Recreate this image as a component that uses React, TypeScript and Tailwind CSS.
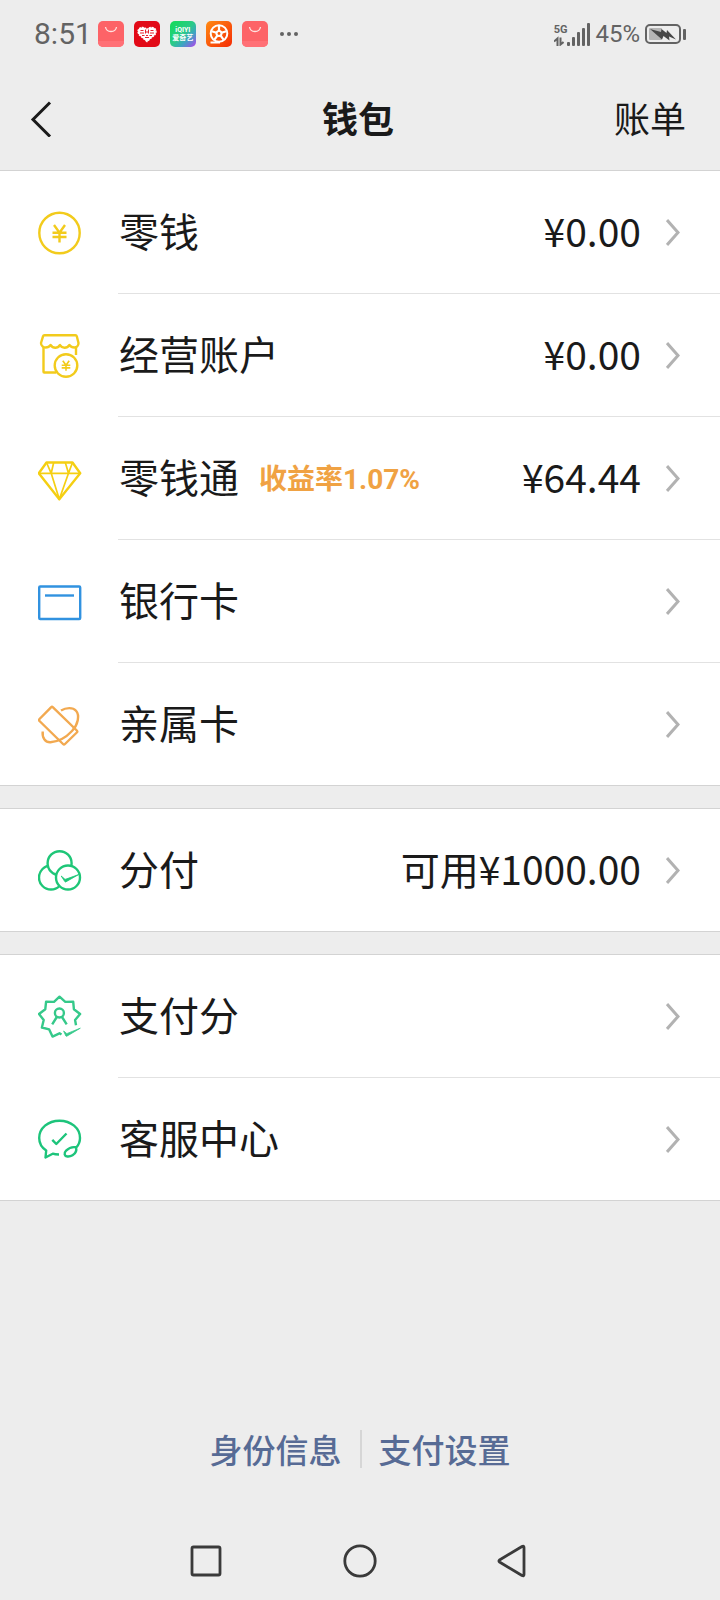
import type { ReactNode } from "react";

type Row = {
  label: string;
  icon: ReactNode;
  note?: string;
  value?: string;
};

const iconClass = "size-11 shrink-0 fill-none stroke-[2.4]";

function CoinIcon() {
  return (
    <svg viewBox="0 0 44 44" className={`${iconClass} stroke-[#f2cb1c]`}>
      <circle cx="21.5" cy="22" r="20.200" />
      <path d="M16 14l5.500 7.600 5.500-7.600M14.500 21.800h14M14.500 26h14M21.500 21.800v9.700" />
    </svg>
  );
}

function ShopIcon() {
  return (
    <svg viewBox="0 0 44 44" className={`${iconClass} stroke-[#f2cb1c]`} strokeLinejoin="round">
      <path d="M5.500 13v24.800q0 .700.700.700h12M38 13v8" />
      <path d="M6.500 1.300h31q1 0 1.300 1l1.700 6.700c0 3-2 4.500-4.200 4.500s-3.700-.800-4.900-2.500c-1.300 1.900-2.800 2.700-4.800 2.700s-3.600-.900-4.600-2.700c-1.200 1.800-2.800 2.700-4.700 2.700s-3.500-.900-4.700-2.700c-1.200 1.700-2.700 2.500-4.900 2.500S3 12 3 9l2-6.700q.3-1 1.500-1z" />
      <circle cx="28" cy="31.500" r="11.300" className="fill-white" />
      <path d="M24.800 26.700l3.200 4.600 3.200-4.600M23.700 31.300h8.600M23.700 33.900h8.600M28 31.300v5.400" strokeWidth="1.600" className="stroke-[1.6]" />
    </svg>
  );
}

function DiamondIcon() {
  return (
    <svg viewBox="0 0 44 44" className={`${iconClass} stroke-[#f5cf12]`} strokeLinejoin="round">
      <path d="M8.500 5.500h26l7.700 10.800-20.900 26L.8 16.300z" />
      <path d="M.8 16.300h41.400M8.500 5.500l4.700 10.800 8.100 26 9.200-26 4-10.800M15.700 5.500l-2.500 10.800M27.300 5.500l3.200 10.800" className="stroke-[1.7]" />
    </svg>
  );
}

function BankCardIcon() {
  return (
    <svg viewBox="0 0 44 44" className={`${iconClass} stroke-[#3192e0]`}>
      <rect x="1.200" y="6.500" width="41" height="32.500" rx="1" />
      <path d="M7 15.500h29" />
    </svg>
  );
}

function FamilyCardIcon() {
  return (
    <svg viewBox="0 0 44 44" className={`${iconClass} stroke-[#f2a950]`} strokeLinejoin="round">
      <path d="M13 5.400L1.500 17q-1 1 0 2l23.500 23q1 1 2 0l11.800-11.500q1-1 0-2L15 5.400q-1-1-2 0z" />
      <path d="M23 8.500c5-3 12-3.300 15 .200 4 4.500 2 14-4 20.300-6.500 7-14 10.700-21.500 11.200-5 .300-8.500-4-7.800-10.700" />
    </svg>
  );
}

function CirclesIcon() {
  return (
    <svg viewBox="0 0 44 44" className={`${iconClass} stroke-[#1ec677]`}>
      <circle cx="13" cy="29.500" r="12" />
      <circle cx="21.600" cy="15.200" r="12" className="fill-white" />
      <circle cx="30" cy="29.500" r="12" className="fill-white" />
      <path d="M23.200 28l3.600 5.600q.4.600 1 .300l13-7.400-12.800 4.600q-.800.300-1.300-.100z" className="fill-[#1ec677] stroke-[.8]" />
    </svg>
  );
}

function BadgeIcon() {
  return (
    <svg viewBox="0 0 44 44" className={`${iconClass} stroke-[#35c98a]`} strokeLinejoin="round">
      <path d="M38 30.200l-.9-5.200 5-6-6.200-4.800-.700-7.500-7.900.200-5.800-5.200-5.500 5.200-7.900-.200-.800 7.500-6.300 4.800 4.700 6-1.800 7.500 7.300 1.900 3.300 7.200 7-3.300 2 1.200" />
      <circle cx="21.400" cy="18" r="4.500" />
      <path d="M18.800 22l-4.600 7.400M24 22l4.700 7.400" />
      <path d="M25.600 36l2.300 5q.300.500.900.200l13.500-8-13 5.200q-.600.200-1-.200z" className="fill-[#35c98a] stroke-[.8]" />
    </svg>
  );
}

function ServiceIcon() {
  return (
    <svg viewBox="0 0 44 44" className={`${iconClass} stroke-[#1dc47b]`} strokeLinejoin="round">
      <path d="M21 37.500c-3 0-4.600-.200-6.300-.800l-7.200 3.800.700-7C3.600 30.500 1.200 26 1.200 21 1.200 11.200 10 3.700 21.500 3.700S42 11.200 42 21c0 3.600-1.200 6.700-3.600 9.300" />
      <path d="M38 30.300c-3-.6-7.300.8-9.900 3.400-2.400 2.500-1.800 5.400 1.300 5.800 3.400.4 7.500-2 8.500-5 .5-1.400.5-2.800.1-4.200z" />
      <path d="M14.300 22.800l4 4.200 10.200-10.500" />
    </svg>
  );
}

const groups: Row[][] = [
  [
    { label: "零钱", icon: <CoinIcon />, value: "¥0.00" },
    { label: "经营账户", icon: <ShopIcon />, value: "¥0.00" },
    { label: "零钱通", icon: <DiamondIcon />, note: "收益率1.07%", value: "¥64.44" },
    { label: "银行卡", icon: <BankCardIcon /> },
    { label: "亲属卡", icon: <FamilyCardIcon /> },
  ],
  [{ label: "分付", icon: <CirclesIcon />, value: "可用¥1000.00" }],
  [
    { label: "支付分", icon: <BadgeIcon /> },
    { label: "客服中心", icon: <ServiceIcon /> },
  ],
];

function BagIcon() {
  return (
    <svg viewBox="0 0 26 26" className="size-[26px]">
      <rect width="26" height="26" rx="5" fill="#fd6367" />
      <path d="M0 20h26v1a5 5 0 0 1-5 5H5a5 5 0 0 1-5-5z" fill="#ff7076" />
      <path d="M7.500 6c1 6 10 6 11 0" fill="none" stroke="#ffe3e0" strokeWidth="1.300" />
    </svg>
  );
}

function HeartAppIcon() {
  return (
    <svg viewBox="0 0 26 26" className="size-[26px]">
      <rect width="26" height="26" rx="5" fill="#e20a17" />
      <path d="M13 20.500L5.500 14C3 11 4 7.500 7 6.700c2.500-.600 4.800.300 6 2 1.200-1.700 3.500-2.600 6-2 3 .800 4 4.300 1.500 7.300z" fill="#fff" stroke="#fff" strokeWidth="1.500" strokeDasharray="2 .800" />
      <path d="M6.500 9.500h3M6 12h4M8 14.500h2.500M16.500 9.500h3M16 12h4M15.500 14.500H18M11.500 8.500v4M14.500 8.500v4M11 16.500h4M13 10v2M12 14.500h2" stroke="#e20a17" strokeWidth=".900" />
    </svg>
  );
}

function VideoAppIcon() {
  return (
    <div className="flex size-[26px] flex-col items-center justify-center overflow-hidden rounded-[5px] bg-[linear-gradient(135deg,#16d95f_10%,#2bc98a_50%,#3fa2c4_70%,#a24fe8_95%)] text-[7px] leading-[8px] font-bold text-white">
      <span>iQIYI</span>
      <span>爱奇艺</span>
    </div>
  );
}

function ReelIcon() {
  return (
    <svg viewBox="0 0 26 26" className="size-[26px]">
      <defs>
        <linearGradient id="reel" x2="1" y2="1">
          <stop stopColor="#ff8a12" />
          <stop offset="1" stopColor="#f52c05" />
        </linearGradient>
      </defs>
      <rect width="26" height="26" rx="5" fill="url(#reel)" />
      <circle cx="13" cy="12.500" r="8.300" fill="none" stroke="#fff" strokeWidth="2" />
      <path d="M4.500 21.500H14" stroke="#fff" strokeWidth="2" />
      <path d="M13 12.500V5M13 12.500l7.300-2.300M13 12.500l4.600 6.200M13 12.500l-4.600 6.200M13 12.500l-7.300-2.300" stroke="#fff" strokeWidth="2.200" />
      <circle cx="13" cy="12.500" r="3.500" fill="#fff" />
      <circle cx="13" cy="12.500" r="1.400" fill="#f85a0a" />
    </svg>
  );
}

function StatusBar() {
  return (
    <div className="flex h-[68px] items-center justify-between px-[34px] font-[Roboto,'Noto_Sans_CJK_SC',sans-serif] text-[#636363]">
      <div className="flex items-center gap-[10px]">
        <span className="-mr-1 text-[30px] leading-9">8:51</span>
        <BagIcon />
        <HeartAppIcon />
        <VideoAppIcon />
        <ReelIcon />
        <BagIcon />
        <svg viewBox="0 0 22 6" className="h-[6px] w-[22px] fill-current">
          <circle cx="4" cy="3" r="2" />
          <circle cx="11" cy="3" r="2" />
          <circle cx="18" cy="3" r="2" />
        </svg>
      </div>
      <div className="flex items-center gap-[5px]">
        <div className="flex items-end">
          <div className="flex flex-col items-start">
            <span className="font-['Liberation_Sans_Narrow',Roboto,sans-serif] text-[11px] leading-3 font-bold">5G</span>
            <svg viewBox="0 0 10 10" className="size-[10px] fill-none stroke-current stroke-2">
              <path d="M0 5.500L3.500 2.500V10M6.500 1.500V8.500l3-2.500" />
            </svg>
          </div>
          <svg viewBox="0 0 23 23" className="size-[23px] fill-current">
            <rect x="0" y="19" width="3" height="4" rx="1" />
            <rect x="5" y="14" width="3" height="9" rx="1" />
            <rect x="10" y="9" width="3" height="14" rx="1" />
            <rect x="15" y="5" width="3" height="18" rx="1" />
            <rect x="20" y="0" width="3" height="23" rx="1" />
          </svg>
        </div>
        <span className="text-2xl leading-8">45%</span>
        <svg viewBox="0 0 41 20" className="h-5 w-[41px]">
          <rect x="1" y="1" width="34" height="18" rx="4" fill="none" stroke="#636363" strokeWidth="2" />
          <rect x="4" y="4" width="13" height="12" rx="1" fill="#b5b5b5" />
          <rect x="38" y="5" width="3" height="11" rx="1" fill="#636363" />
          <path d="M5 5l11 3 .500-3 5 4 .500-3 9 9.500-7-3 .500 4-6-4.500-1.500 3.500z" fill="#484848" />
        </svg>
      </div>
    </div>
  );
}

function WalletRow({ label, icon, note, value }: Row) {
  return (
    <button type="button" className="flex w-full items-center pl-[38px] text-left">
      {icon}
      <div className="ml-9 flex min-w-0 flex-1 items-center border-b border-[#e2e2e2] pr-10 pl-px group-last:border-b-0">
        <span className="flex h-[122px] items-center pb-1 text-[40px] leading-[60px]">{label}</span>
        {note && (
          <span className="mt-1 ml-5 font-[Roboto,'Noto_Sans_CJK_SC',sans-serif] text-[28px] leading-10 font-bold text-[#f0a243]">
            {note}
          </span>
        )}
        <span className="ml-auto pb-1 text-[39px] leading-[60px]">{value}</span>
        <svg viewBox="0 0 14 28" className="ml-[25px] h-7 w-[14px] fill-none stroke-[#b2b2b2] stroke-3">
          <path d="M1 2L12 14.500 1 27" />
        </svg>
      </div>
    </button>
  );
}

export default function App() {
  return (
    <div className="flex min-h-screen flex-col bg-[#ededed] font-['Noto_Sans_CJK_SC',sans-serif] text-[#1a1a1a]">
      <StatusBar />

      {/* Title bar */}
      <header className="grid h-[102px] grid-cols-3 items-center pr-[34px] pl-[30px]">
        <button type="button" aria-label="返回" className="justify-self-start">
          <svg viewBox="0 0 22 36" className="h-9 w-[22px] fill-none stroke-current stroke-3">
            <path d="M20 1.500L3 18.500l17 17" />
          </svg>
        </button>
        <h1 className="pb-1 text-center text-[36px] leading-[52px] font-bold">钱包</h1>
        <button type="button" className="justify-self-end pb-1 text-[36px] leading-[52px]">
          账单
        </button>
      </header>

      {/* Wallet entries */}
      <main className="flex flex-col gap-[22px]">
        {groups.map((rows, i) => (
          <ul key={i} className="border-y border-[#d3d3d3] bg-white">
            {rows.map((row) => (
              <li key={row.label} className="group">
                <WalletRow {...row} />
              </li>
            ))}
          </ul>
        ))}
      </main>

      {/* Bottom links */}
      <footer className="mt-auto mb-[54px] flex items-center justify-center pt-10 text-[33px] leading-[38px] font-medium text-[#576b95]">
        <a href="#identity" className="border-r-2 border-[#d6d6d6] pr-[18px]">
          身份信息
        </a>
        <a href="#settings" className="pl-[17px]">
          支付设置
        </a>
      </footer>

      {/* System navigation */}
      <nav className="flex h-[78px] items-center justify-center gap-[117px]">
        <button type="button" aria-label="最近任务">
          <svg viewBox="0 0 36 36" className="size-9 fill-none stroke-[#3a3a3a] stroke-[2.8]">
            <rect x="3" y="4" width="28" height="28" rx="1.500" />
          </svg>
        </button>
        <button type="button" aria-label="主屏幕">
          <svg viewBox="0 0 36 36" className="size-9 fill-none stroke-[#3a3a3a] stroke-[2.8]">
            <circle cx="18" cy="18" r="15.200" />
          </svg>
        </button>
        <button type="button" aria-label="后退">
          <svg viewBox="0 0 36 36" className="size-9 fill-none stroke-[#3a3a3a] stroke-[2.8]" strokeLinejoin="round">
            <path d="M4.500 17q-1 1 0 2l22.500 13.500q2 1 2-1V4.500q0-2-2-1z" />
          </svg>
        </button>
      </nav>
    </div>
  );
}
